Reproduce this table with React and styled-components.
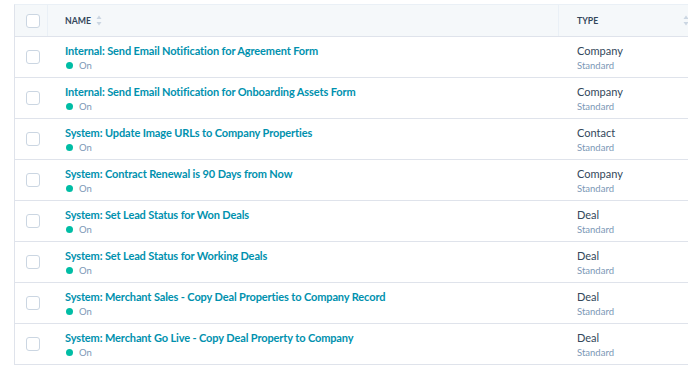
import React from 'react';
import styled, { createGlobalStyle } from 'styled-components';

const GlobalStyle = createGlobalStyle`
  body {
    margin: 0;
    background: #fff;
    font-family: Lato, 'Open Sans', sans-serif;
    overflow: hidden;
  }
`;

const Page = styled.div`
  padding: 4px 0 0 14px;
  width: 688px;
  height: 370px;
  box-sizing: border-box;
`;

const Table = styled.div`
  width: 690px;
  border-left: 1px solid #dfe3eb;
  border-top: 1px solid #eaf0f6;
`;

const Row = styled.div`
  display: grid;
  grid-template-columns: 33px 511px 1fr;
  height: ${p => (p.$head ? 32 : 41)}px;
  background: ${p => (p.$head ? '#f5f8fa' : '#fff')};
  border-bottom: 1px solid #dfe3eb;
  box-sizing: border-box;
`;

const Cell = styled.div`
  display: flex;
  flex-direction: column;
  justify-content: center;
  padding-left: ${p => p.$pad || 0}px;
  border-right: ${p => (p.$divider ? '1px solid #eaf0f6' : 'none')};
`;

const CheckCell = styled.div`
  display: flex;
  align-items: center;
  justify-content: center;
  border-right: ${p => (p.$divider ? '1px solid #eaf0f6' : 'none')};
`;

const Check = styled.span`
  width: 12px;
  height: 12px;
  border: 1.5px solid #cbd6e2;
  border-radius: 3px;
  background: #fff;
  margin-left: 3px;
`;

const HeadLabel = styled.div`
  display: flex;
  align-items: center;
  justify-content: space-between;
  font-size: 8.7px;
  font-weight: 700;
  color: #33475b;
  padding-right: ${p => p.$right || 0}px;
`;

const LabelText = styled.span`
  display: flex;
  align-items: center;
  gap: 5px;
`;

const Sort = styled.svg`
  width: 6px;
  height: 11px;
`;

const Title = styled.a`
  font-size: 11px;
  font-weight: 700;
  letter-spacing: -0.12px;
  color: #0091ae;
  text-decoration: none;
  line-height: 15px;
`;

const Status = styled.div`
  display: flex;
  align-items: center;
  gap: 6px;
  font-size: 9.5px;
  color: #7c98b6;
  line-height: 13px;
  margin-top: 1px;
`;

const Dot = styled.span`
  width: 7px;
  height: 7px;
  border-radius: 50%;
  background: #00bda5;
  margin-left: 1px;
`;

const TypeName = styled.div`
  font-size: 11px;
  color: #33475b;
  line-height: 15px;
`;

const TypeSub = styled.div`
  font-size: 9.5px;
  color: #7c98b6;
  line-height: 13px;
  margin-top: 1px;
`;

const SortIcon = () => (
  <Sort viewBox="0 0 6 11">
    <path d="M3 0.5 L5.5 4 L0.5 4 Z" fill="#cbd6e2" />
    <path d="M3 10.5 L5.5 7 L0.5 7 Z" fill="#cbd6e2" />
  </Sort>
);

const workflows = [
  { name: 'Internal: Send Email Notification for Agreement Form', type: 'Company' },
  { name: 'Internal: Send Email Notification for Onboarding Assets Form', type: 'Company' },
  { name: 'System: Update Image URLs to Company Properties', type: 'Contact' },
  { name: 'System: Contract Renewal is 90 Days from Now', type: 'Company' },
  { name: 'System: Set Lead Status for Won Deals', type: 'Deal' },
  { name: 'System: Set Lead Status for Working Deals', type: 'Deal' },
  { name: 'System: Merchant Sales - Copy Deal Properties to Company Record', type: 'Deal' },
  { name: 'System: Merchant Go Live - Copy Deal Property to Company', type: 'Deal' },
];

export default function App() {
  return (
    <>
      <GlobalStyle />
      <Page>
        <Table>
          <Row $head>
            <CheckCell $divider>
              <Check />
            </CheckCell>
            <Cell $pad={17} $divider>
              <HeadLabel>
                <LabelText>NAME <SortIcon /></LabelText>
              </HeadLabel>
            </Cell>
            <Cell $pad={18}>
              <HeadLabel $right={16}>
                <LabelText>TYPE</LabelText>
                <SortIcon />
              </HeadLabel>
            </Cell>
          </Row>
          {workflows.map((w, i) => (
            <Row key={i}>
              <CheckCell>
                <Check />
              </CheckCell>
              <Cell $pad={17}>
                <Title href="#">{w.name}</Title>
                <Status>
                  <Dot />
                  On
                </Status>
              </Cell>
              <Cell $pad={18}>
                <TypeName>{w.type}</TypeName>
                <TypeSub>Standard</TypeSub>
              </Cell>
            </Row>
          ))}
        </Table>
      </Page>
    </>
  );
}
